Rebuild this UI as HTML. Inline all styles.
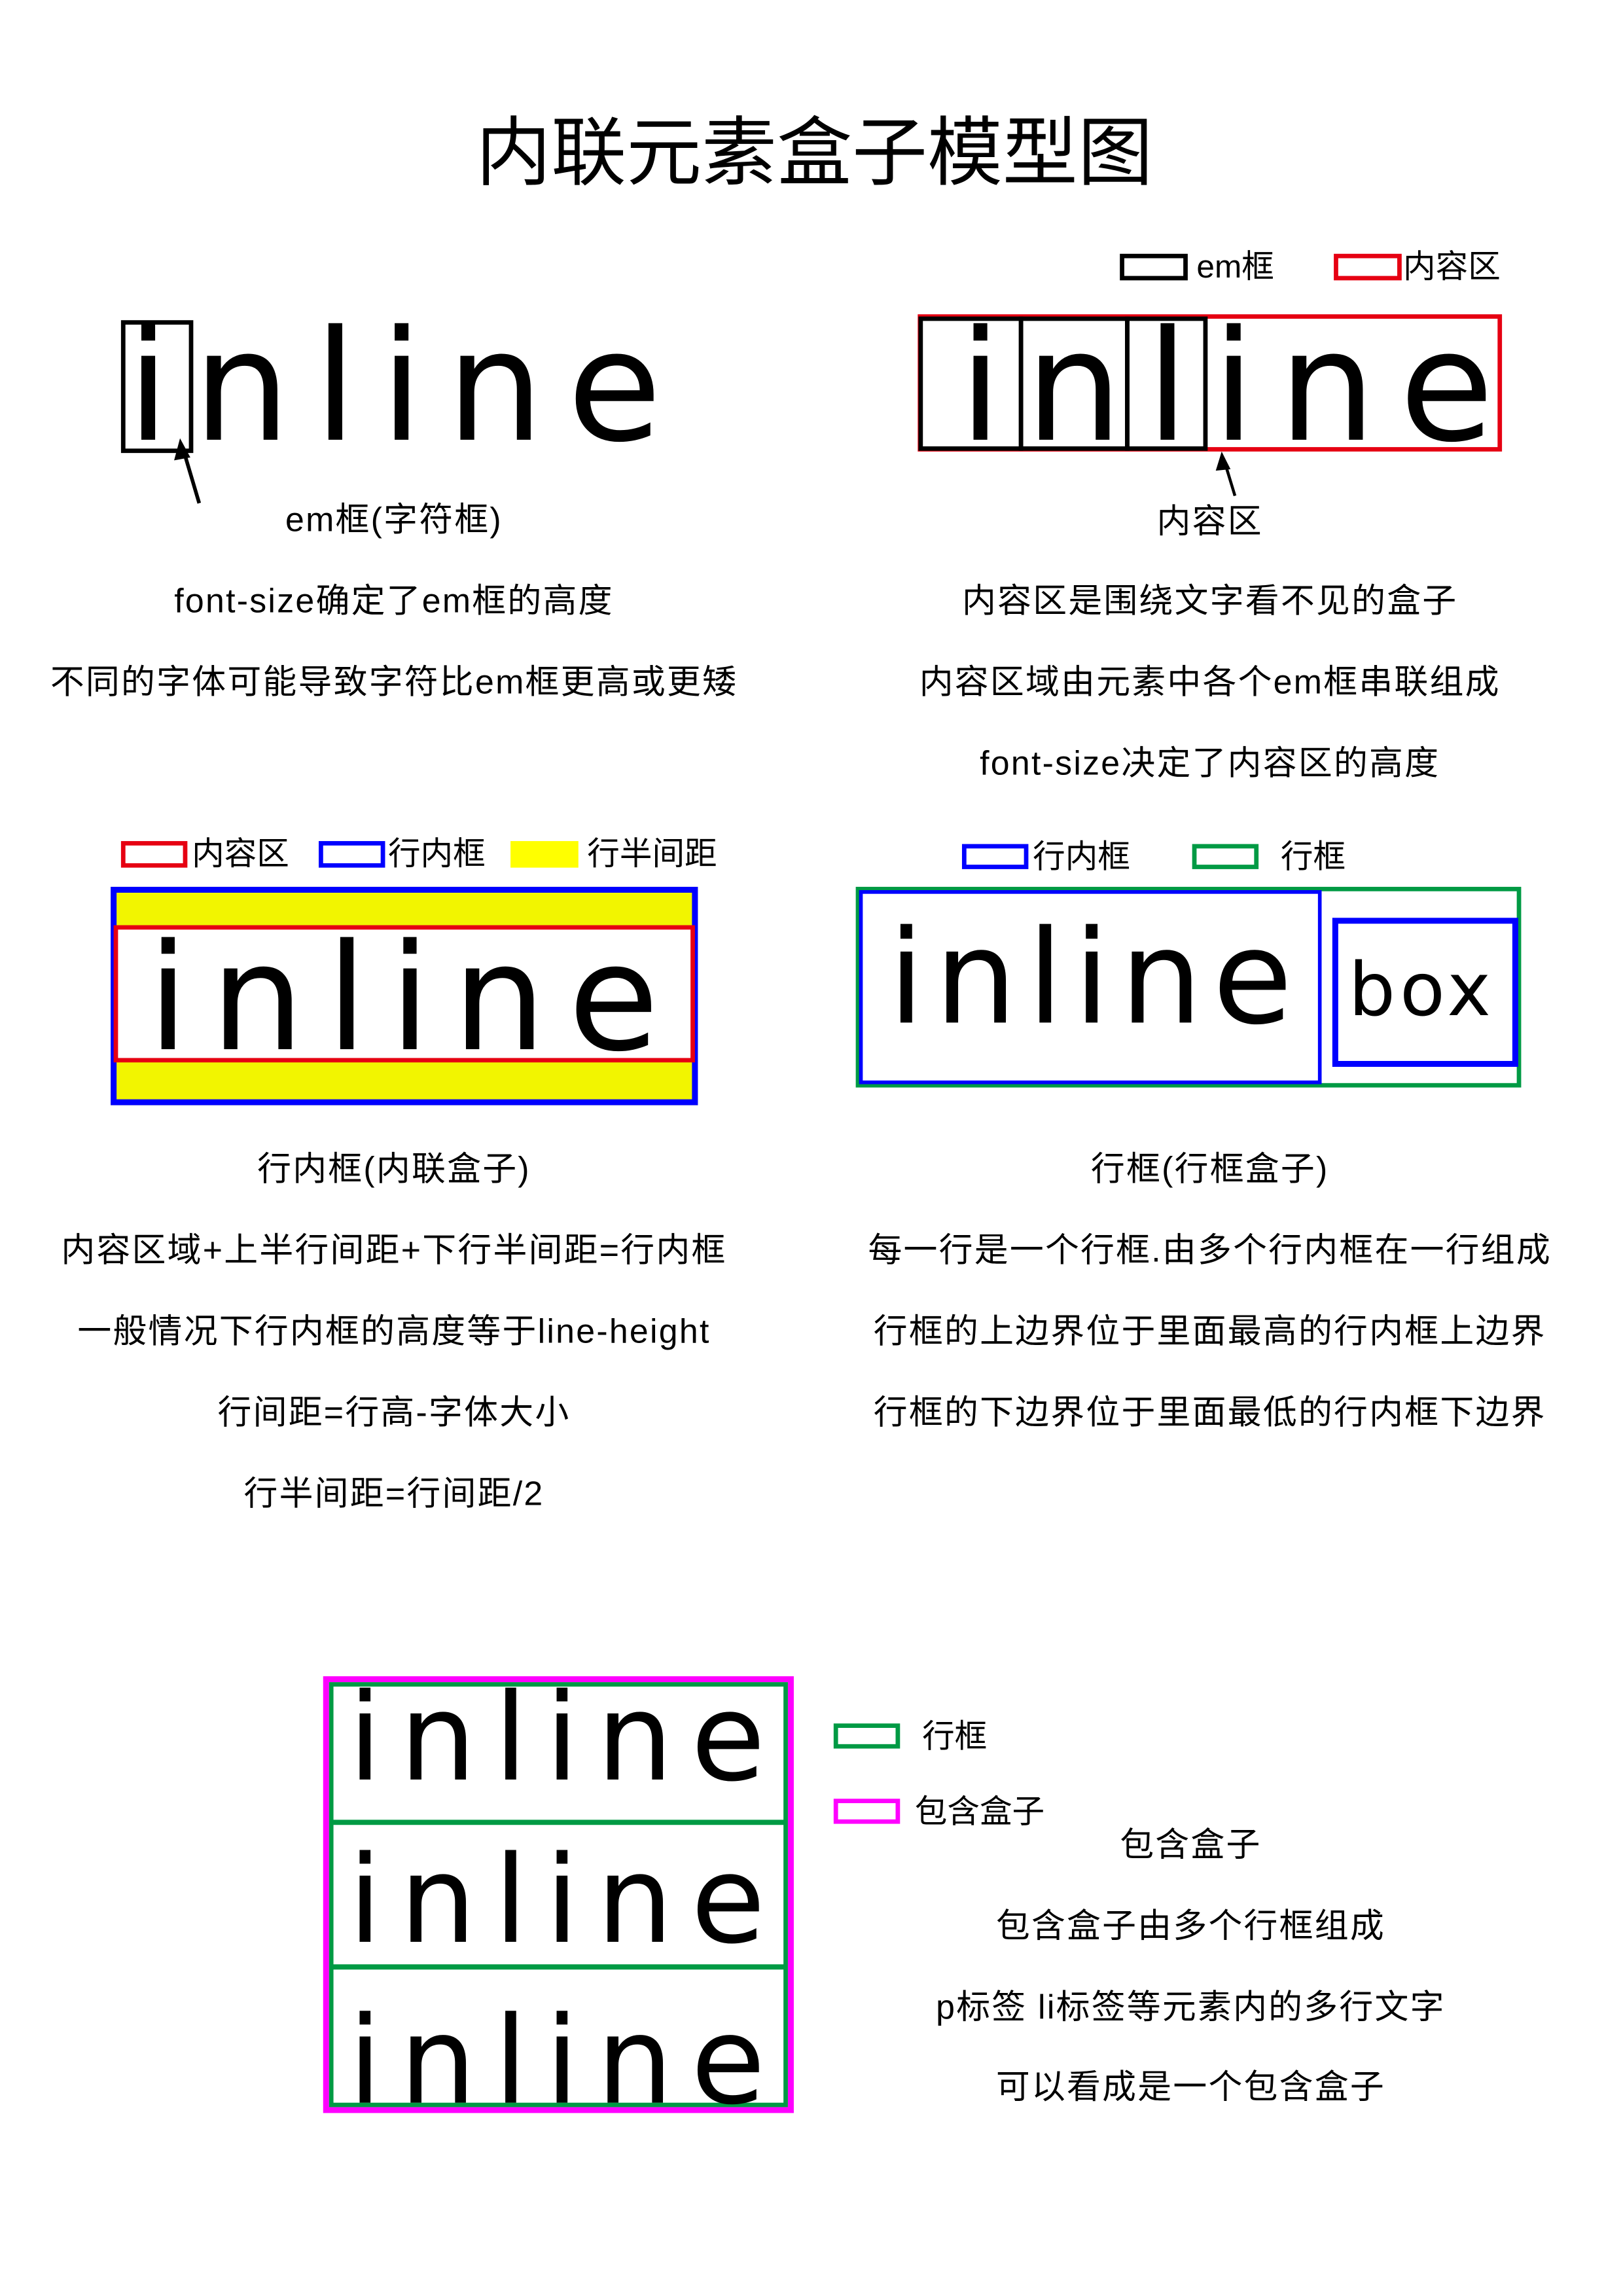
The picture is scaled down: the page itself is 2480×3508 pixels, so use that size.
<!DOCTYPE html>
<html><head><meta charset="utf-8">
<style>
html,body{margin:0;padding:0;background:#fff;}
svg{display:block;}
text{font-family:"Liberation Sans","Noto Sans CJK SC",sans-serif;fill:#000;}
.big{font-family:"DejaVu Sans","Noto Sans CJK SC",sans-serif;}
.t{font-size:23px;text-anchor:middle;letter-spacing:1px;}
.l{font-size:22px;}
</style></head>
<body>
<svg width="2480" height="3508" viewBox="0 0 1100 1556" xmlns="http://www.w3.org/2000/svg">
<rect width="1100" height="1556" fill="#fff"/>
<text x="552" y="121" style="font-size:51px;text-anchor:middle;">内联元素盒子模型图</text>

<rect x="760.5" y="173.5" width="43" height="15" fill="none" stroke="#000" stroke-width="3"/>
<text class="l" x="811" y="188">em框</text>
<rect x="905.5" y="173.5" width="43" height="15" fill="none" stroke="#e60012" stroke-width="3"/>
<text class="l" x="951" y="188">内容区</text>

<rect x="83.5" y="218.5" width="46" height="87" fill="none" stroke="#000" stroke-width="3"/>
<text class="big" x="86" y="298" style="font-size:104px;letter-spacing:16px;">inline</text>
<line x1="135" y1="341" x2="124" y2="304" stroke="#000" stroke-width="2.5"/>
<polygon points="122,297 118,312 129,310" fill="#000"/>
<text class="t" x="267" y="360">em框(字符框)</text>
<text class="t" x="267" y="415">font-size确定了em框的高度</text>
<text class="t" x="267" y="470">不同的字体可能导致字符比em框更高或更矮</text>

<rect x="623.5" y="214.5" width="393" height="90" fill="none" stroke="#e60012" stroke-width="3"/>
<rect x="624" y="216" width="68" height="88" fill="none" stroke="#000" stroke-width="3"/>
<rect x="692" y="216" width="72" height="88" fill="none" stroke="#000" stroke-width="3"/>
<rect x="764" y="216" width="53" height="88" fill="none" stroke="#000" stroke-width="3"/>
<text class="big" x="650" y="298" style="font-size:104px;letter-spacing:16px;">inline</text>
<line x1="837" y1="336" x2="830" y2="313" stroke="#000" stroke-width="2"/>
<polygon points="828,306 824,319 834,318" fill="#000"/>
<text class="t" x="820" y="361">内容区</text>
<text class="t" x="820" y="415">内容区是围绕文字看不见的盒子</text>
<text class="t" x="820" y="470">内容区域由元素中各个em框串联组成</text>
<text class="t" x="820" y="525">font-size决定了内容区的高度</text>

<rect x="83.5" y="571.5" width="42" height="15" fill="none" stroke="#e60012" stroke-width="3"/>
<text class="l" x="130" y="586">内容区</text>
<rect x="217.5" y="571.5" width="42" height="15" fill="none" stroke="#0000ff" stroke-width="3"/>
<text class="l" x="263" y="586">行内框</text>
<rect x="346" y="570" width="46" height="18" fill="#ffff00"/>
<text class="l" x="398" y="586">行半间距</text>
<rect x="75" y="601" width="398" height="148" fill="#f2f500"/>
<rect x="77" y="603" width="394" height="144" fill="none" stroke="#0000ff" stroke-width="4"/>
<rect x="78.5" y="628.5" width="391" height="90" fill="#fff" stroke="#e60012" stroke-width="3"/>
<text class="big" x="100" y="711" style="font-size:100px;letter-spacing:15px;">inline</text>
<text class="t" x="267" y="800">行内框(内联盒子)</text>
<text class="t" x="267" y="855">内容区域+上半行间距+下行半间距=行内框</text>
<text class="t" x="267" y="910">一般情况下行内框的高度等于line-height</text>
<text class="t" x="267" y="965">行间距=行高-字体大小</text>
<text class="t" x="267" y="1020">行半间距=行间距/2</text>

<rect x="653.5" y="573.5" width="42" height="14" fill="none" stroke="#0000ff" stroke-width="3"/>
<text class="l" x="700" y="588">行内框</text>
<rect x="809.5" y="573.5" width="42" height="14" fill="none" stroke="#009a44" stroke-width="3"/>
<text class="l" x="868" y="588">行框</text>
<rect x="581.5" y="602.5" width="448" height="133" fill="none" stroke="#009a44" stroke-width="3"/>
<rect x="583.5" y="604.5" width="311" height="129" fill="none" stroke="#0000ff" stroke-width="2.5"/>
<rect x="905" y="624" width="122" height="97" fill="none" stroke="#0000ff" stroke-width="4"/>
<text class="big" x="602" y="693" style="font-size:88px;letter-spacing:7px;">inline</text>
<text class="big" x="914" y="688" style="font-size:50px;letter-spacing:3px;">box</text>
<text class="t" x="820" y="800">行框(行框盒子)</text>
<text class="t" x="820" y="855">每一行是一个行框.由多个行内框在一行组成</text>
<text class="t" x="820" y="910">行框的上边界位于里面最高的行内框上边界</text>
<text class="t" x="820" y="965">行框的下边界位于里面最低的行内框下边界</text>

<rect x="221" y="1138" width="315" height="292" fill="none" stroke="#ff00ff" stroke-width="4"/>
<rect x="224.5" y="1141.5" width="308" height="285" fill="none" stroke="#009a44" stroke-width="3"/>
<line x1="224" y1="1235" x2="533" y2="1235" stroke="#009a44" stroke-width="3.5"/>
<line x1="224" y1="1333" x2="533" y2="1333" stroke="#009a44" stroke-width="3.5"/>
<text class="big" x="236" y="1206" style="font-size:82px;letter-spacing:12px;">inline</text>
<text class="big" x="236" y="1316" style="font-size:82px;letter-spacing:12px;">inline</text>
<text class="big" x="236" y="1425" style="font-size:82px;letter-spacing:12px;">inline</text>

<rect x="566.5" y="1169.5" width="42" height="14" fill="none" stroke="#009a44" stroke-width="3"/>
<text class="l" x="625" y="1184">行框</text>
<rect x="566.5" y="1220.5" width="42" height="14" fill="none" stroke="#ff00ff" stroke-width="3"/>
<text class="l" x="620" y="1235">包含盒子</text>
<text class="t" x="807" y="1258">包含盒子</text>
<text class="t" x="807" y="1313">包含盒子由多个行框组成</text>
<text class="t" x="807" y="1368">p标签 li标签等元素内的多行文字</text>
<text class="t" x="807" y="1422">可以看成是一个包含盒子</text>
</svg>
</body></html>
